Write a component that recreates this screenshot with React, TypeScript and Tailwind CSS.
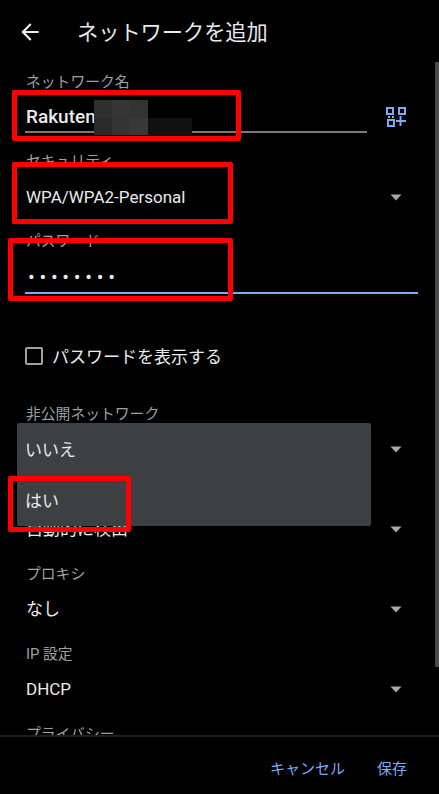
import React from 'react';

const Caret = () => (
  <svg width="12" height="7" viewBox="0 0 12 7" className="shrink-0">
    <path d="M0.5 0.5h11L6 6.5z" fill="#a8a8a8" />
  </svg>
);

const QrAdd = () => (
  <svg width="20" height="20" viewBox="0 0 20 20" fill="none" stroke="#7baaf7" strokeWidth="2">
    <rect x="1" y="1" width="6" height="6" />
    <rect x="13" y="1" width="6" height="6" />
    <rect x="2" y="13" width="6" height="6" />
    <path d="M2 10h2M6 10h2M14.5 9v10M10 14h10" />
  </svg>
);

type FieldProps = { label: string; value: string; valueClass?: string };

const SelectField: React.FC<FieldProps> = ({ label, value, valueClass }) => (
  <div className="h-20">
    <div className="h-5 text-[14.8px] leading-5 text-[#9aa0a6]">{label}</div>
    <div className={`${valueClass ?? 'mt-[13px]'} flex h-6 items-center justify-between pr-[37px] text-[17px] leading-6 text-[#e8eaed]`}>
      <span>{value}</span>
      <Caret />
    </div>
  </div>
);

const RedBox: React.FC<{ className: string }> = ({ className }) => (
  <div className={`absolute rounded-[2px] border-[5px] border-[#ff0000] ${className}`} />
);

export default function App() {
  return (
    <div
      className="relative flex h-[794px] w-[439px] flex-col overflow-hidden bg-black"
      style={{ fontFamily: 'Roboto, "Noto Sans CJK JP", sans-serif' }}
    >
      <header className="flex h-[64px] shrink-0 items-center pl-[17px]">
        <svg width="26" height="26" viewBox="0 0 24 24" fill="#e8eaed">
          <path d="M20 11H7.83l5.59-5.59L12 4l-8 8 8 8 1.41-1.41L7.83 13H20v-2z" />
        </svg>
        <h1 className="ml-[34px] pt-[2px] text-[21.2px] font-normal text-[#e8eaed]">ネットワークを追加</h1>
      </header>

      <main className="flex-1 overflow-hidden pl-[26px] pt-[8px]">
        <div className="h-[79px]">
          <div className="h-5 text-[14.8px] leading-5 text-[#9aa0a6]">ネットワーク名</div>
          <div className="flex items-start">
            <div className="-ml-px mt-[13px] h-[28px] w-[342px] whitespace-nowrap border-b-2 border-[#7a7a7a] pl-px text-[19px] font-medium leading-6 text-[#e8eaed]">
              Rakuten
            </div>
            <div className="ml-[19px] mt-[15px]">
              <QrAdd />
            </div>
          </div>
        </div>

        <SelectField label="セキュリティ" value="WPA/WPA2-Personal" valueClass="mt-[14px]" />

        <div className="h-[173px]">
          <div className="h-5 text-[14.8px] leading-5 text-[#9aa0a6]">パスワード</div>
          <div className="-ml-px mt-[14px] h-[29px] w-[393px] border-b-2 border-[#7baaf7] pl-[3px] text-[20px] leading-6 tracking-[4.7px] text-[#e8eaed]">
            ••••••••
          </div>
          <label className="-ml-px mt-[52px] flex h-[20px] items-center">
            <span className="h-[18px] w-[18px] rounded-[2px] border-2 border-[#a0a0a0]" />
            <span className="ml-[9px] pt-[4px] text-[17px] text-[#e8eaed]">パスワードを表示する</span>
          </label>
        </div>

        <SelectField label="非公開ネットワーク" value="いいえ" />
        <SelectField label="従量制" value="自動的に検出" />
        <SelectField label="プロキシ" value="なし" />
        <SelectField label="IP 設定" value="DHCP" />
        <div className="h-5 text-[14.8px] leading-5 text-[#9aa0a6]">プライバシー</div>
      </main>

      <footer className="flex h-[59px] shrink-0 items-center justify-end gap-[32px] border-t-2 border-[#1f1f1f] pr-[32px] pt-[8px] text-[15px] text-[#7baaf7]">
        <button>キャンセル</button>
        <button>保存</button>
      </footer>

      {/* scrollbar */}
      <div className="absolute right-0 top-[62px] h-[605px] w-1 bg-[#4a4a4a]" />

      {/* open dropdown */}
      <div className="absolute left-[17px] top-[423px] flex h-[103px] w-[354px] flex-col rounded-[2px] bg-[#3c4043] pl-[8px] pt-[2px] text-[17px] text-[#e8eaed]">
        <div className="flex h-[52px] items-center">いいえ</div>
        <div className="flex h-[49px] items-center">はい</div>
      </div>

      {/* mosaic over the network name */}
      <div className="absolute left-[94px] top-[100px] grid h-[35px] w-[54px] grid-cols-3 grid-rows-2">
        <div className="bg-[#2f2f2f]" />
        <div className="bg-[#353535]" />
        <div className="bg-[#333333]" />
        <div className="bg-[#2a2a2a]" />
        <div className="bg-[#343434]" />
        <div className="bg-[#383838]" />
      </div>
      <div className="absolute left-[148px] top-[118px] h-[17px] w-[44px] bg-[#111111]" />

      {/* annotation boxes */}
      <RedBox className="left-[12px] top-[90px] h-[51px] w-[229px]" />
      <RedBox className="left-[12px] top-[162px] h-[62px] w-[221px]" />
      <RedBox className="left-[8px] top-[238px] h-[63px] w-[225px]" />
      <RedBox className="left-[8px] top-[476px] h-[56px] w-[123px]" />
    </div>
  );
}
